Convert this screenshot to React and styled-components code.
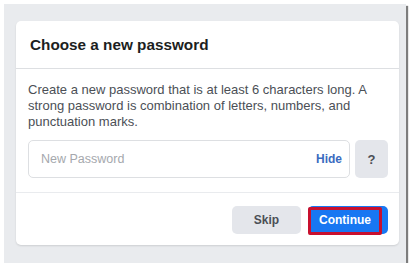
import React from "react";
import styled, { createGlobalStyle } from "styled-components";

const Global = createGlobalStyle`
  html, body { margin: 0; padding: 0; background: #ffffff; }
  body { font-family: "Liberation Sans", Arial, sans-serif; }
  * { box-sizing: border-box; }
`;

const Frame = styled.div`
  margin: 4px 0 0 4px;
  width: 402px;
  height: 259px;
  background: #e9ebee;
  box-shadow: 2px 2px 1px #7d7d7d;
  padding: 17px 7px 18px 12px;
`;

const Card = styled.div`
  background: #ffffff;
  border-radius: 5px;
  height: 100%;
  display: flex;
  flex-direction: column;
  box-shadow: 0 1px 2px rgba(0, 0, 0, 0.12);
`;

const Header = styled.div`
  height: 48px;
  padding-left: 14px;
  display: flex;
  align-items: center;
  border-bottom: 1px solid #dddfe2;
`;

const Title = styled.h2`
  margin: 0;
  font-size: 15.3px;
  font-weight: 700;
  color: #1c1e21;
`;

const Body = styled.div`
  padding: 13px 11px 14px 12px;
  border-bottom: 1px solid #e9ebee;
`;

const Text = styled.p`
  margin: 0 0 10px 0;
  font-size: 13px;
  line-height: 16px;
  color: #4b4f56;
`;

const InputRow = styled.div`
  display: flex;
  gap: 5px;
  height: 38px;
`;

const Field = styled.div`
  flex: 1;
  border: 1px solid #dddfe2;
  border-radius: 5px;
  display: flex;
  align-items: center;
  padding: 0 7px 0 12px;
`;

const Input = styled.input`
  flex: 1;
  border: none;
  outline: none;
  background: transparent;
  font-family: "Liberation Sans", Arial, sans-serif;
  font-size: 12.5px;
  color: #1c1e21;
  padding: 0;
  &::placeholder { color: #a5a8ad; }
`;

const Hide = styled.span`
  font-size: 12px;
  font-weight: 700;
  color: #3b6bc0;
`;

const Help = styled.button`
  width: 33px;
  border: none;
  border-radius: 5px;
  background: #e4e6eb;
  font-family: "Liberation Sans", Arial, sans-serif;
  font-size: 13px;
  font-weight: 700;
  color: #4b4f56;
  padding: 0;
`;

const Footer = styled.div`
  flex: 1;
  display: flex;
  justify-content: flex-end;
  align-items: flex-start;
  gap: 7px;
  padding: 13px 11px 0 0;
`;

const Button = styled.button`
  position: relative;
  height: 28px;
  width: ${(p) => p.$w}px;
  border: none;
  border-radius: 5px;
  background: ${(p) => (p.$primary ? "#1877f2" : "#e4e6eb")};
  color: ${(p) => (p.$primary ? "#ffffff" : "#4b4f56")};
  font-family: "Liberation Sans", Arial, sans-serif;
  font-size: 12px;
  font-weight: 700;
  padding: 0;
  text-align: center;
`;

const Highlight = styled.span`
  position: absolute;
  left: 0;
  top: 1px;
  width: 74px;
  height: 28px;
  border: 3.5px solid #c8102e;
  border-radius: 2px;
  pointer-events: none;
`;

const Label = styled.span`
  position: relative;
  display: inline-block;
  margin-right: 6px;
`;

export default function App() {
  return (
    <>
      <Global />
      <Frame>
        <Card>
          <Header>
            <Title>Choose a new password</Title>
          </Header>
          <Body>
            <Text>
              Create a new password that is at least 6 characters long. A strong
              password is combination of letters, numbers, and punctuation marks.
            </Text>
            <InputRow>
              <Field>
                <Input type="password" placeholder="New Password" />
                <Hide>Hide</Hide>
              </Field>
              <Help>?</Help>
            </InputRow>
          </Body>
          <Footer>
            <Button $w={69}>Skip</Button>
            <Button $w={80} $primary>
              <Label>Continue</Label>
              <Highlight />
            </Button>
          </Footer>
        </Card>
      </Frame>
    </>
  );
}
